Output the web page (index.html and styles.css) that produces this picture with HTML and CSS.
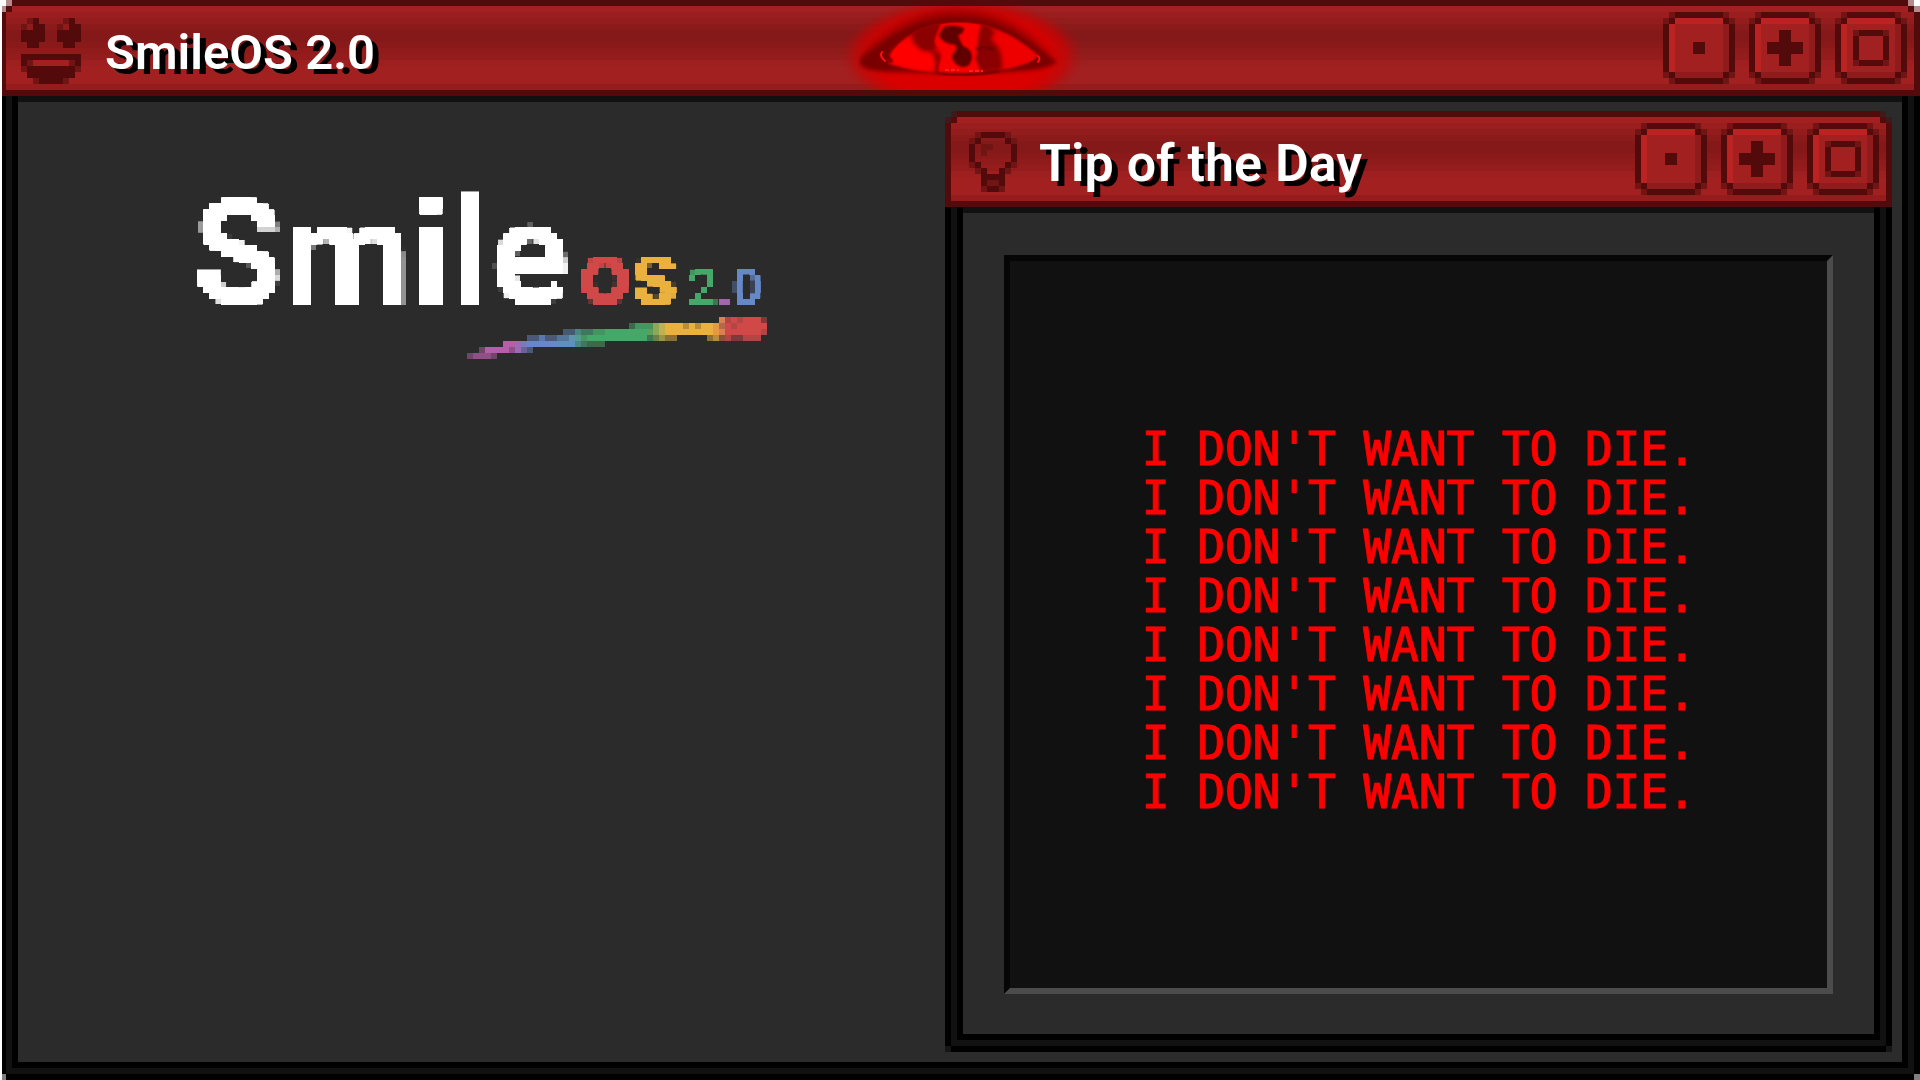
FILE: index.html
```html
<!DOCTYPE html>
<html lang="en">
<head>
<meta charset="utf-8">
<meta name="viewport" content="width=device-width, initial-scale=1">
<title>SmileOS 2.0</title>
<link rel="stylesheet" href="styles.css">
</head>
<body>
<svg class="defs" aria-hidden="true">
  <defs>
    <symbol id="cap" viewBox="0 0 12 12">
      <path fill="#711414" d="M1 0h10v1h1v10h-1v1H1v-1H0V1h1z"/>
      <path fill="#520a0a" d="M2 0h8v1h1v1h1v8h-1v1h-1v1H2v-1H1v-1H0V2h1V1h1z"/>
      <path fill="#bb2222" d="M2 1h8v1H2v8H1V2h1z"/>
      <path fill="#a32020" d="M2 2h8v8H2z"/>
      <path fill="#8f1c1c" d="M10 2h1v8h-1v1H2v-1h8z"/>
    </symbol>
  </defs>
</svg>

<main class="window desktop">
  <header class="titlebar">
    <div class="heading">
      <svg class="icon-smile" viewBox="0 0 10 11" shape-rendering="crispEdges" aria-hidden="true">
        <path fill="#711414" d="M1 0h1v1h-1zM7 0h1v1h-1zM0 1h1v1h-1zM6 1h1v1h-1zM1 7h1v1h-1zM8 7h1v1h-1zM0 8h1v1h-1zM9 8h1v1h-1zM2 10h1v1h-1zM7 10h1v1h-1z"/>
        <path fill="#520a0a" d="M2 0h1v1h1v3h-1v1h-2v-1h-1v-2h2zM8 0h1v1h1v3h-1v1h-2v-1h-1v-2h2zM0 6h10v2h-1v-1h-8v1h-1zM1 8h8v2h-2v1h-4v-1h-2z"/>
        <path fill="#8f1b1b" d="M1 1h1v1h-1zM7 1h1v1h-1z"/>
        <path fill="#a32020" d="M2 7h6v1h-6z"/>
      </svg>
      <h1 class="title">SmileOS 2.0</h1>
    </div>
    <svg class="eye" viewBox="0 0 250 84" role="img" aria-label="Eye">
      <defs>
        <radialGradient id="glow">
          <stop offset="0" stop-color="#e00000"/>
          <stop offset="0.72" stop-color="#d80000"/>
          <stop offset="0.86" stop-color="#cc0202" stop-opacity="0.7"/>
          <stop offset="1" stop-color="#a81010" stop-opacity="0"/>
        </radialGradient>
        <filter id="b1" x="-20%" y="-20%" width="140%" height="140%"><feGaussianBlur stdDeviation="1"/></filter>
        <filter id="b2" x="-20%" y="-30%" width="140%" height="160%"><feGaussianBlur stdDeviation="2"/></filter>
        <filter id="b4" x="-20%" y="-40%" width="140%" height="180%"><feGaussianBlur stdDeviation="4"/></filter>
        <clipPath id="bar"><path d="M0 0h250v84H0z"/></clipPath>
        <clipPath id="ball"><path d="M50 54C58 34 80 19 112 17C152 15 176 30 199 50C190 60 160 67 122 68C90 68 66 64 50 58z"/></clipPath>
      </defs>
      <g clip-path="url(#bar)">
        <ellipse cx="123" cy="50" rx="122" ry="58" fill="url(#glow)"/>
        <path fill="#900000" filter="url(#b4)" d="M22 52C48 22 80 5 120 5C160 6 190 24 218 56C194 40 170 24 120 22C80 24 58 38 44 56z"/>
        <path fill="#790000" filter="url(#b2)" d="M21 53C50 30 74 14 116 12C160 12 186 30 218 56C206 66 176 65 150 67C110 69 80 66 56 66C40 66 24 64 21 58z"/>
        <path fill="#ee0000" filter="url(#b1)" d="M48 53C56 36 78 20 112 17C152 15 176 30 199 49C194 60 160 66 122 67C90 67 70 64 50 58z"/>
        <g clip-path="url(#ball)">
          <path fill="#ff0000" filter="url(#b2)" d="M50 48q14-18 24-14t24 12v18q-32 0-48-10z"/>
          <path fill="#8b0000" filter="url(#b2)" d="M78 16Q96 16 104 18L98 42L92 46Q80 46 74 36Q71 28 78 16zM142 16Q152 18 156 28Q150 30 154 36Q164 42 163 64L142 67Q134 56 136 44Q140 28 142 16zM98 45Q106 50 100 68L95 66Q99 54 92 46z"/>
          <path fill="#f80000" filter="url(#b1)" d="M102 18q14-4 40 0q-4 8-4 18q2 8-2 16q2 10 8 15l-44 1q-1-10 2-14q2-8 0-10q-8-4-6-12z"/>
          <path fill="#600000" filter="url(#b1)" d="M105 21q9-3 20 1q0 6-6 7q2 6 5 11q9 3 9 12q-2 10-10 9q-10-3-10-12q5-4 4-10q-14-1-17-10z"/>
          <path fill="none" stroke="#700000" stroke-width="3" filter="url(#b1)" d="M137 43q10-4 18 1"/>
        </g>
        <path fill="none" stroke="#620000" stroke-width="2" filter="url(#b1)" d="M98 67Q128 71 160 65"/>
        <path fill="none" stroke="#780000" stroke-width="4" filter="url(#b1)" d="M48 42q-3 8 5 14"/>
        <path fill="none" stroke="#ff0c0c" stroke-width="2" stroke-linecap="round" d="M43 46q-3 4 3 9M199 50q3 2 0 6"/>
        <path fill="none" stroke="#ff2020" stroke-width="2" stroke-dasharray="4 2" d="M106 64h14M130 65h14"/>
      </g>
    </svg>
    <div class="controls">
      <button class="control" type="button" aria-label="Minimize"><svg viewBox="0 0 12 12" shape-rendering="crispEdges"><use href="#cap"/><path fill="#520a0a" d="M5 5h2v2H5z"/></svg></button>
      <button class="control" type="button" aria-label="Add"><svg viewBox="0 0 12 12" shape-rendering="crispEdges"><use href="#cap"/><path fill="#520a0a" d="M5 3h2v2h2v2H7v2H5V7H3V5h2z"/></svg></button>
      <button class="control" type="button" aria-label="Maximize"><svg viewBox="0 0 12 12" shape-rendering="crispEdges"><use href="#cap"/><path fill="#711414" d="M3 3h6v6H3z"/><path fill="#520a0a" d="M4 3h4v1h1v4H8v1H4V8H3V4h1z"/><path fill="#a32020" d="M4 4h4v4H4z"/></svg></button>
    </div>
  </header>
  <div class="frame"><div class="frame-mid"><div class="frame-body workspace">
    <div class="brand">
      <svg class="logo" viewBox="0 0 570 168" role="img" aria-label="Smile os 2.0">
        <defs>
          <filter id="mosaic" filterUnits="userSpaceOnUse" x="-6" y="-6" width="582" height="180" color-interpolation-filters="sRGB">
            <feFlood x="2" y="2" width="2" height="2" flood-color="#000" result="dot"/>
            <feOffset in="dot" x="0" y="0" width="6" height="6" result="cell"/>
            <feTile in="cell" result="grid"/>
            <feComposite in="SourceGraphic" in2="grid" operator="in"/>
            <feMorphology operator="dilate" radius="2"/>
          </filter>
        </defs>
        <g filter="url(#mosaic)">
          <text class="logo-smile" x="-5" y="114">Smile</text>
          <text class="logo-os" x="382" y="114"><tspan fill="#d14848">o</tspan><tspan fill="#ebb13e">s</tspan></text>
          <text class="logo-version" x="491" y="114"><tspan fill="#45a768">2</tspan><tspan fill="#a566b0">.</tspan><tspan fill="#6688c6">0</tspan></text>
        </g>
        <g transform="translate(270 126) scale(6)" shape-rendering="crispEdges">
          <path fill="#6f4668" d="M0 6h5v1H0zM2 5h1v1H2z"/>
          <path fill="#8f5088" d="M1 6h3v1H1zM7 5h1v1H7z"/>
          <path fill="#b55fab" d="M3 5h4v1H3zM6 4h2v1H6z"/>
          <path fill="#996cb5" d="M8 4h1v2H8z"/>
          <path fill="#7a7ac0" d="M9 4h1v1H9z"/>
          <path fill="#6a6496" d="M9 5h1v1H9z"/>
          <path fill="#4c5878" d="M10 5h1v1h-1zM10 3h2v1h-2zM13 3h2v1h-2z"/>
          <path fill="#5a78ae" d="M12 3h1v1h-1z"/>
          <path fill="#6688c6" d="M10 4h5v1h-5z"/>
          <path fill="#5f90bd" d="M15 4h3v1h-3z"/>
          <path fill="#53759c" d="M15 3h2v1h-2z"/>
          <path fill="#445a70" d="M16 2h2v1h-2z"/>
          <path fill="#5f94ad" d="M17 3h1v1h-1z"/>
          <path fill="#559b94" d="M18 3h1v1h-1z"/>
          <path fill="#4a8780" d="M18 2h1v1h-1zM18 4h1v1h-1z"/>
          <path fill="#41775e" d="M19 2h2v1h-2zM19 4h1v1h-1z"/>
          <path fill="#3b6a4a" d="M20 4h3v1h-3zM27 1h1v1h-1z"/>
          <path fill="#43965f" d="M19 3h1v1h-1zM21 2h2v1h-2zM28 1h3v1h-3z"/>
          <path fill="#45a768" d="M20 3h10v1H20zM23 2h7v1h-7z"/>
          <path fill="#3d7850" d="M30 3h1v1h-1z"/>
          <path fill="#5f9f5a" d="M30 2h1v1h-1z"/>
          <path fill="#8fa858" d="M31 1h1v2h-1z"/>
          <path fill="#6c8048" d="M31 3h1v1h-1z"/>
          <path fill="#bfb050" d="M32 1h1v2h-1z"/>
          <path fill="#9b9448" d="M32 3h1v1h-1z"/>
          <path fill="#8c7038" d="M33 3h2v1h-2zM40 3h1v1h-1z"/>
          <path fill="#ebb13e" d="M33 1h8v2h-8z"/>
          <path fill="#b98d3a" d="M36 1h1v1h-1zM38 1h1v1h-1zM41 3h1v1h-1z"/>
          <path fill="#e49a45" d="M41 1h1v2h-1z"/>
          <path fill="#db8050" d="M42 0h1v1h-1zM42 2h1v1h-1z"/>
          <path fill="#b5694a" d="M42 1h1v1h-1z"/>
          <path fill="#8a5038" d="M42 3h1v1h-1z"/>
          <path fill="#d14848" d="M43 0h6v3h-6zM49 1h1v1h-1z"/>
          <path fill="#b34545" d="M43 0h1v1h-1zM45 0h1v1h-1zM44 1h1v1h-1zM49 2h1v1h-1zM43 3h1v1h-1zM46 3h3v1h-3z"/>
          <path fill="#7d3a3b" d="M49 0h1v1h-1zM44 3h2v1h-2z"/>
        </g>
      </svg>
    </div>

    <section class="window tip">
      <header class="titlebar">
        <div class="heading">
          <svg class="icon-bulb" viewBox="0 0 8 10" shape-rendering="crispEdges" aria-hidden="true">
            <path fill="#711414" d="M1 0h6v1h1v1h-1v-1h-6v1h-1v-1h1zM2 2h2v1h-1v1h-1zM0 5h1v1h1v1h-1v-1h-1zM7 5h1v1h-1v1h-1v-1h1zM3 8h2v1h-2zM2 9h4v1h-4z"/>
            <path fill="#520a0a" d="M2 0h4v1h-4zM1 1h1v1h-1zM6 1h1v1h-1zM0 2h1v3h-1zM7 2h1v3h-1zM1 5h1v1h-1zM6 5h1v1h-1zM2 6h1v1h2v-1h1v3h-1v-1h-2v1h-1zM3 9h2v1h-2z"/>
          </svg>
          <h2 class="title title-tip">Tip of the Day</h2>
        </div>
        <div class="controls">
          <button class="control" type="button" aria-label="Minimize tip"><svg viewBox="0 0 12 12" shape-rendering="crispEdges"><use href="#cap"/><path fill="#520a0a" d="M5 5h2v2H5z"/></svg></button>
          <button class="control" type="button" aria-label="Add tip"><svg viewBox="0 0 12 12" shape-rendering="crispEdges"><use href="#cap"/><path fill="#520a0a" d="M5 3h2v2h2v2H7v2H5V7H3V5h2z"/></svg></button>
          <button class="control" type="button" aria-label="Maximize tip"><svg viewBox="0 0 12 12" shape-rendering="crispEdges"><use href="#cap"/><path fill="#711414" d="M3 3h6v6H3z"/><path fill="#520a0a" d="M4 3h4v1h1v4H8v1H4V8H3V4h1z"/><path fill="#a32020" d="M4 4h4v4H4z"/></svg></button>
        </div>
      </header>
      <div class="frame"><div class="frame-mid"><div class="frame-body tip-body">
        <div class="panel">
          <p class="message">I DON'T WANT TO DIE.<br>I DON'T WANT TO DIE.<br>I DON'T WANT TO DIE.<br>I DON'T WANT TO DIE.<br>I DON'T WANT TO DIE.<br>I DON'T WANT TO DIE.<br>I DON'T WANT TO DIE.<br>I DON'T WANT TO DIE.</p>
        </div>
      </div></div></div>
    </section>
  </div></div></div>
</main>
</body>
</html>
```
FILE: styles.css
```css
* {
  box-sizing: border-box;
}

body {
  margin: 0;
  background: #fff;
  font-family: Roboto, "Liberation Sans", sans-serif;
}

.defs {
  display: none;
}

.window {
  --corner: #fff;
  --corner-soft: #b58a8a;
  --corner-foot: #808080;
  display: flex;
  flex-direction: column;
}

.desktop {
  min-height: 100vh;
  margin-left: 2px;
}

.tip {
  --corner: #2b2b2b;
  --corner-soft: #3f1a1a;
  --corner-foot: #161616;
}

/* Title bar: banded red fill, stepped pixel corners */
.titlebar {
  position: relative;
  display: flex;
  align-items: center;
  justify-content: space-between;
  height: 96px;
  padding: 0 7px 0 15px;
  border: 6px solid #520a0a;
  background: linear-gradient(
    #a32020 6px, #9a1e1e 6px 12px, #931c1c 12px 18px, #8b1a1a 18px 24px,
    #851818 24px 36px, #8a1919 36px 42px, #8f1b1b 42px 48px, #951c1c 48px 54px,
    #9e1f1f 54px 60px, #a32020 60px 78px, #941c1c 78px);
}

.desktop > .titlebar {
  display: grid;
  grid-template-columns: 1fr auto 1fr;
  border-left-width: 4px;
}

.titlebar::before,
.titlebar::after {
  content: "";
  position: absolute;
  top: -6px;
  width: 12px;
  height: 12px;
}

.titlebar::before {
  left: -6px;
  background:
    linear-gradient(var(--corner), var(--corner)) 0 0 / 6px 6px no-repeat,
    linear-gradient(var(--corner-soft), var(--corner-soft)) 6px 0 / 6px 6px no-repeat,
    linear-gradient(var(--corner-soft), var(--corner-soft)) 0 6px / 6px 6px no-repeat,
    #520a0a;
}

.desktop > .titlebar::before {
  clip-path: inset(0 0 0 2px);
}

.titlebar::after {
  right: -6px;
  background:
    linear-gradient(var(--corner), var(--corner)) 6px 0 / 6px 6px no-repeat,
    linear-gradient(var(--corner-soft), var(--corner-soft)) 0 0 / 6px 6px no-repeat,
    linear-gradient(var(--corner-soft), var(--corner-soft)) 6px 6px / 6px 6px no-repeat,
    #520a0a;
}

.heading {
  display: flex;
  align-items: center;
  gap: 24px;
  padding-top: 6px;
}

.tip .heading {
  gap: 22px;
  padding-left: 3px;
}

.icon-smile {
  width: 60px;
  height: 66px;
}

.icon-bulb {
  width: 48px;
  height: 60px;
}

.title {
  margin: 0;
  padding-top: 4px;
  color: #fff;
  font-size: 49px;
  font-weight: 600;
  line-height: 64px;
  white-space: nowrap;
  text-shadow: 6px 5px 0 #000;
}

.title-tip {
  font-size: 52px;
}

.eye {
  width: 250px;
  height: 84px;
}

.controls {
  display: flex;
  justify-content: flex-end;
  gap: 14px;
}

.control {
  width: 72px;
  height: 72px;
  padding: 0;
  border: 0;
  background: none;
}

.control svg {
  display: block;
  width: 72px;
  height: 72px;
}

/* Three nested borders: black, charcoal, black */
.frame,
.frame-mid,
.frame-body {
  flex: 1;
  display: flex;
  flex-direction: column;
  border: 6px solid #000;
  border-top: 0;
}

.frame {
  position: relative;
}

.desktop > .frame {
  border-left-width: 4px;
}

.frame::before,
.frame::after {
  content: "";
  position: absolute;
  bottom: -6px;
  width: 6px;
  height: 6px;
  background: var(--corner-foot);
}

.frame::before {
  left: -6px;
}

.desktop > .frame::before {
  left: -4px;
  width: 4px;
}

.frame::after {
  right: -6px;
}

.frame-mid {
  border-color: #111;
}

.frame-body {
  background: linear-gradient(#111 6px, #2b2b2b 6px);
}

.workspace {
  display: grid;
  grid-template-columns: minmax(0, 927fr) minmax(0, 947fr);
  padding: 15px 10px 10px 0;
}

.brand {
  padding: 80px 0 0 179px;
}

.logo {
  display: block;
  width: 570px;
  height: 168px;
  overflow: visible;
}

.logo-smile {
  fill: #fff;
  font: bold 148px Roboto, sans-serif;
}

.logo-os {
  font: bold 92px Roboto, sans-serif;
}

.logo-version {
  font: 500 52px Roboto, sans-serif;
}

.tip-body {
  padding: 48px 41px 40px;
}

.panel {
  flex: 1;
  display: flex;
  align-items: center;
  justify-content: center;
  padding-bottom: 8px;
  border: 6px solid;
  border-color: #060606 #4c4c4c #4c4c4c #060606;
  background: #111;
}

.message {
  margin: 0;
  color: #f00;
  font: 46px/49px "DejaVu Sans Mono", "Liberation Mono", monospace;
  white-space: nowrap;
  -webkit-text-stroke: 1px #f00;
}
```
